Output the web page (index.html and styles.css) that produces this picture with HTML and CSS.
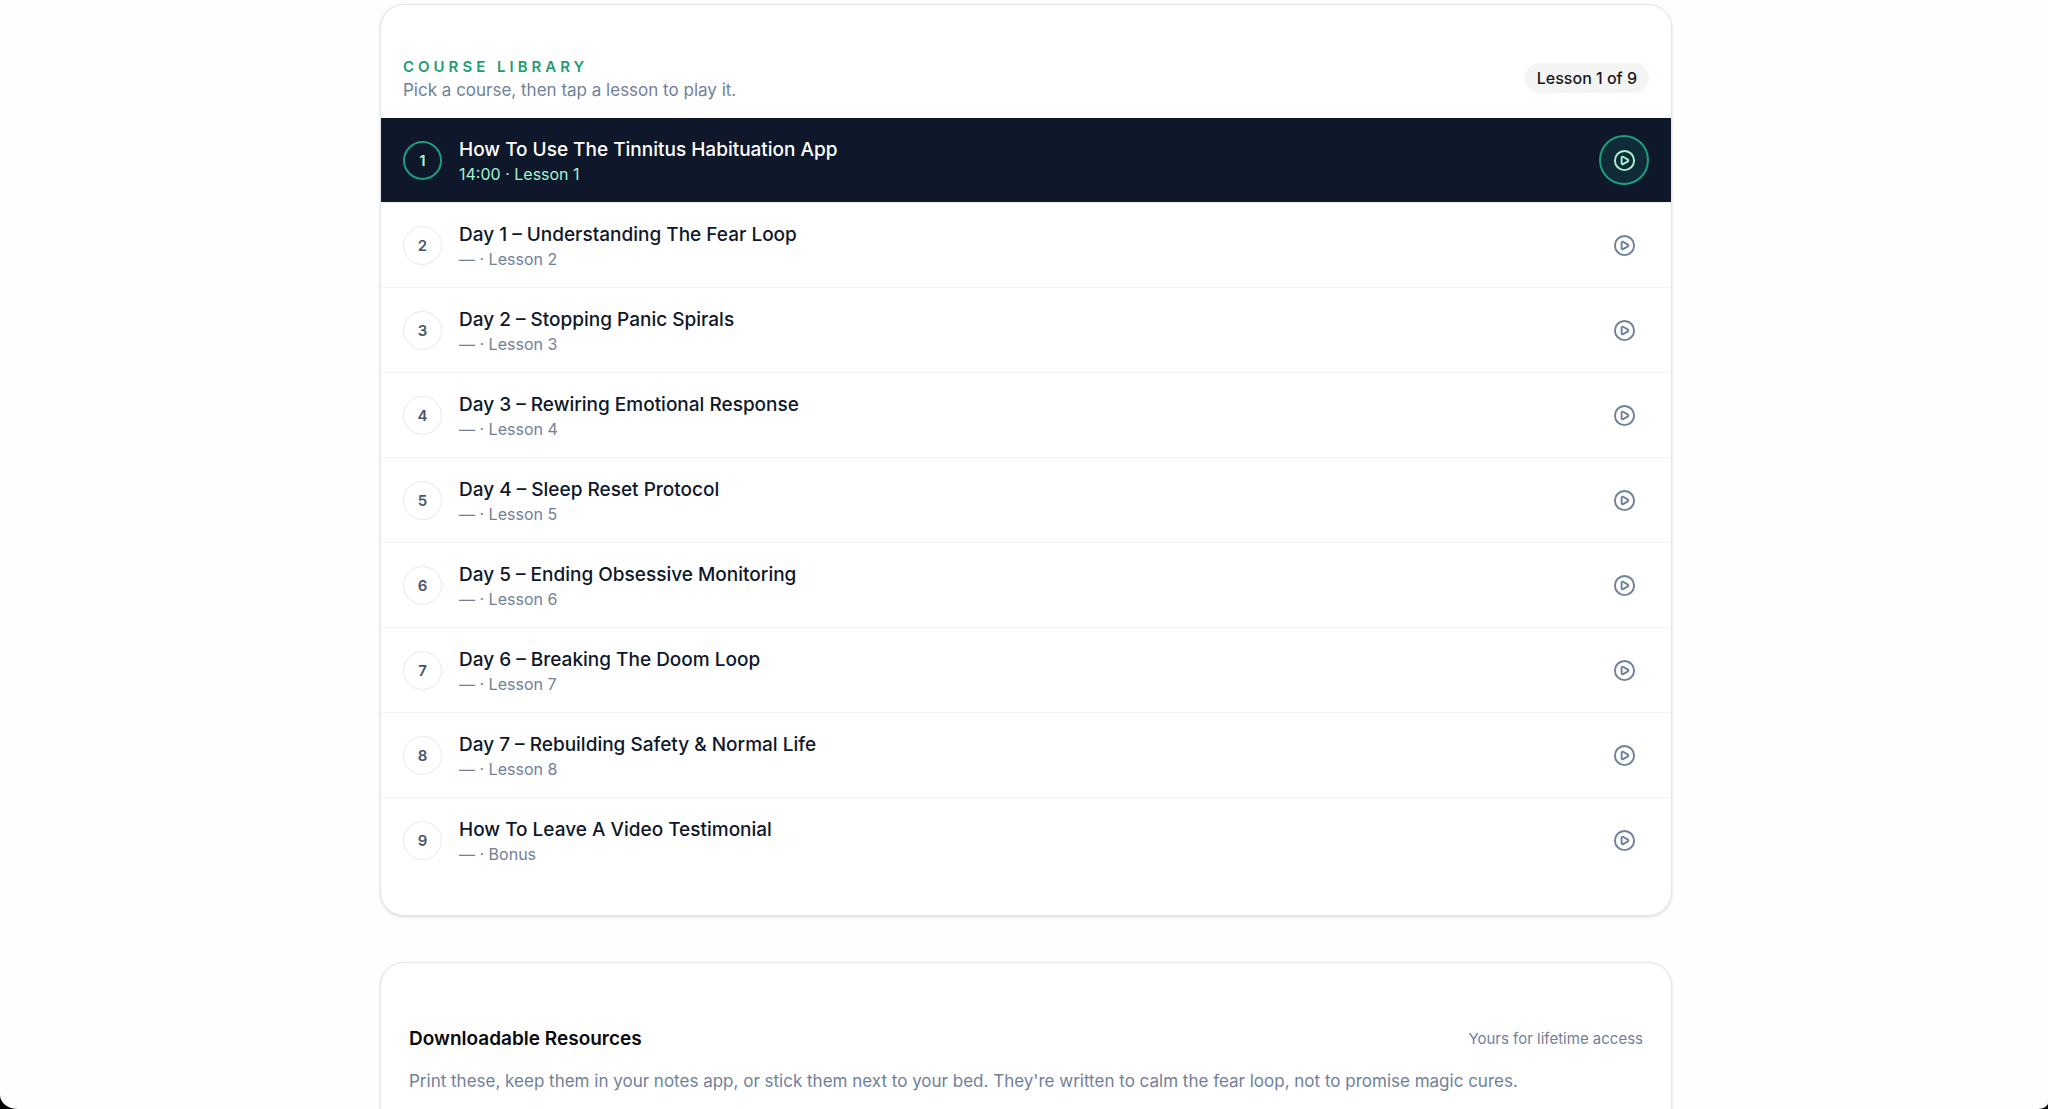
FILE: index.html
```html
<!DOCTYPE html>
<html lang="en">
<head>
    <meta charset="UTF-8">
    <meta name="viewport" content="width=device-width, initial-scale=1.0">
    <title>Course Library</title>
    <link rel="stylesheet" href="styles.css">
</head>
<body>
    <!-- Shared play icon -->
    <svg class="icon-defs" aria-hidden="true">
        <symbol id="icon-play" viewBox="0 0 24 24">
            <circle cx="12" cy="12" r="10"/>
            <path d="M9 9.003a1 1 0 0 1 1.517-.859l4.997 2.997a1 1 0 0 1 0 1.718l-4.997 2.997A1 1 0 0 1 9 14.996z"/>
        </symbol>
    </svg>

    <main class="page">
        <div class="container">
            <section class="card library">
                <div class="library-header">
                    <div>
                        <h2 class="library-label">Course Library</h2>
                        <p class="library-hint">Pick a course, then tap a lesson to play it.</p>
                    </div>
                    <span class="lesson-count">Lesson 1 of 9</span>
                </div>
                <ul class="lesson-list" id="lessonList"></ul>
            </section>

            <section class="card resources">
                <div class="resources-header">
                    <h2 class="resources-title">Downloadable Resources</h2>
                    <span class="resources-note">Yours for lifetime access</span>
                </div>
                <p class="resources-text">Print these, keep them in your notes app, or stick them next to your bed. They're written to calm the fear loop, not to promise magic cures.</p>
            </section>
        </div>
    </main>

    <script src="script.js"></script>
</body>
</html>
```

FILE: script.js
```js
const lessons = [
    { title: 'How To Use The Tinnitus Habituation App', duration: '14:00', label: 'Lesson 1' },
    { title: 'Day 1 – Understanding The Fear Loop', duration: '—', label: 'Lesson 2' },
    { title: 'Day 2 – Stopping Panic Spirals', duration: '—', label: 'Lesson 3' },
    { title: 'Day 3 – Rewiring Emotional Response', duration: '—', label: 'Lesson 4' },
    { title: 'Day 4 – Sleep Reset Protocol', duration: '—', label: 'Lesson 5' },
    { title: 'Day 5 – Ending Obsessive Monitoring', duration: '—', label: 'Lesson 6' },
    { title: 'Day 6 – Breaking The Doom Loop', duration: '—', label: 'Lesson 7' },
    { title: 'Day 7 – Rebuilding Safety & Normal Life', duration: '—', label: 'Lesson 8' },
    { title: 'How To Leave A Video Testimonial', duration: '—', label: 'Bonus' }
];

const lessonList = document.getElementById('lessonList');

lessons.forEach((lesson, index) => {
    const item = document.createElement('li');
    item.className = 'lesson-item';
    item.innerHTML = `
        <button type="button" class="lesson">
            <span class="lesson-number">${index + 1}</span>
            <span class="lesson-info">
                <span class="lesson-title">${lesson.title.replace('&', '&amp;')}</span>
                <span class="lesson-meta">${lesson.duration} · ${lesson.label}</span>
            </span>
            <span class="lesson-play"><svg class="icon" aria-hidden="true"><use href="#icon-play"/></svg></span>
        </button>
    `;
    lessonList.appendChild(item);
});

// Highlight the selected lesson and update the counter
function selectLesson(index) {
    document.querySelectorAll('.lesson').forEach((lesson, i) => {
        lesson.classList.toggle('active', i === index);
    });
    document.querySelector('.lesson-count').textContent = `Lesson ${index + 1} of ${lessons.length}`;
}

document.querySelectorAll('.lesson').forEach((lesson, index) => {
    lesson.addEventListener('click', () => selectLesson(index));
});

selectLesson(0);
```

FILE: styles.css
```css
/* General Styles */
* {
    box-sizing: border-box;
}

body {
    font-family: Inter, "Liberation Sans", sans-serif;
    font-size: 16px;
    line-height: 24px;
    background-color: #000000;
    margin: 0;
}

h2, p, ul {
    margin: 0;
    padding: 0;
}

/* Page with rounded bottom corners */
.page {
    height: 100vh;
    padding: 4px 24px 0 28px;
    overflow: hidden;
    background-color: #fefefe;
    border-radius: 0 0 10px 18px / 0 0 6px 14px;
}

.container {
    display: flex;
    flex-direction: column;
    gap: 46px;
    max-width: 1292px;
    margin: 0 auto;
}

.card {
    background-color: #ffffff;
    border: 1px solid #e6e6eb;
    border-radius: 24px;
    box-shadow: 0 1px 3px rgba(15, 23, 42, 0.15);
}

/* Course Library */
.library {
    padding: 49px 0 33px;
    overflow: hidden;
}

.library-header {
    display: flex;
    align-items: center;
    justify-content: space-between;
    padding: 0 22px 16px;
}

.library-label {
    font-size: 15px;
    line-height: 26px;
    font-weight: 600;
    letter-spacing: 4px;
    text-transform: uppercase;
    color: #1f9c71;
}

.library-hint {
    margin-bottom: 2px;
    color: #71809a;
    font-size: 17px;
    line-height: 20px;
}

.lesson-count {
    padding: 3px 12px;
    border-radius: 16px;
    background-color: #f4f4f5;
    color: #18181b;
    font-size: 16px;
    font-weight: 500;
}

/* Lessons */
.lesson-list {
    list-style: none;
}

.lesson-item + .lesson-item {
    border-top: 1px solid #f1f3f7;
}

.lesson {
    display: flex;
    align-items: center;
    gap: 17px;
    width: 100%;
    padding: 17px 22px;
    border: none;
    background-color: transparent;
    font-family: inherit;
    text-align: left;
    cursor: pointer;
}

.lesson-number {
    display: flex;
    align-items: center;
    justify-content: center;
    width: 39px;
    height: 39px;
    border: 1px solid #e4e8ef;
    border-radius: 50%;
    color: #475569;
    font-size: 15px;
    font-weight: 600;
}

.lesson-info {
    display: flex;
    flex: 1;
    flex-direction: column;
    padding-top: 2px;
}

.lesson-title {
    color: #0f172a;
    font-size: 19px;
    line-height: 26px;
    font-weight: 500;
}

.lesson-meta {
    color: #71809a;
    font-size: 16px;
    line-height: 22px;
}

.lesson-play {
    display: flex;
    align-items: center;
    justify-content: center;
    width: 50px;
    height: 50px;
    border: 2px solid transparent;
    border-radius: 50%;
    color: #71809a;
}

.icon-defs {
    position: absolute;
    width: 0;
    height: 0;
}

.icon {
    width: 23px;
    height: 23px;
    fill: none;
    stroke: currentColor;
    stroke-width: 2;
    stroke-linecap: round;
    stroke-linejoin: round;
}

/* Active lesson */
.lesson.active {
    background-color: #0f172a;
}

.active .lesson-number {
    border: 2px solid #1a9e7c;
    color: #a7f3d0;
}

.active .lesson-title {
    color: #ffffff;
}

.active .lesson-meta {
    color: #a7f3d0;
}

.active .lesson-play {
    background-color: #0f2b37;
    border-color: #1a9e7c;
    color: #a7f3d0;
}

/* Downloadable Resources */
.resources {
    padding: 62px 28px 48px;
}

.resources-header {
    display: flex;
    align-items: center;
    justify-content: space-between;
    margin-bottom: 16px;
}

.resources-title {
    font-size: 19px;
    line-height: 28px;
    font-weight: 600;
    color: #09090b;
}

.resources-note {
    font-size: 15px;
    color: #71809a;
}

.resources-text {
    color: #71809a;
    font-size: 17px;
}
```
